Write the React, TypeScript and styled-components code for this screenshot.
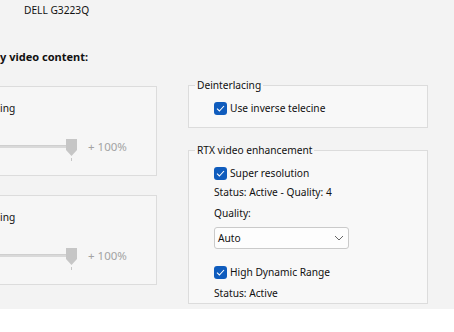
import React from "react";
import styled, {createGlobalStyle} from "styled-components";

const GlobalStyle = createGlobalStyle`
  html, body {
    margin: 0;
    background: #ffffff;
  }
  body {
    font-family: "Noto Sans", "Open Sans", sans-serif;
    font-size: 10.2px;
    color: #111111;
  }
`;

const Page = styled.div`
  height: 309px;
  background: #f3f3f3;
  overflow: hidden;
`;

const DisplayName = styled.div`
  padding: 2px 0 0 24px;
  line-height: 16px;
`;

const Heading = styled.div`
  margin-top: 31px;
  line-height: 16px;
  font-size: 11px;
  font-weight: 700;
`;

const Columns = styled.div`
  display: flex;
  margin-top: 12px;
  gap: 31px;
`;

const LeftColumn = styled.div`
  width: 157px;
  display: flex;
  flex-direction: column;
  gap: 19px;
  padding-top: 9px;
`;

const SettingBox = styled.div`
  height: 90px;
  box-sizing: border-box;
  border: 1px solid #dcdcdc;
  border-left: none;
  background: #f6f6f6;
  padding-top: 13px;
`;

const OptionText = styled.div`
  line-height: 16px;
`;

const SliderRow = styled.div`
  display: flex;
  align-items: flex-start;
  margin-top: 23px;
`;

const Track = styled.div`
  width: 66px;
  height: 3px;
  margin-top: 6px;
  background: #d9d9d9;
  border-top: 1px solid #cfcfcf;
  box-sizing: border-box;
`;

const Thumb = styled.svg`
  flex: none;
  display: block;
`;

const SliderValue = styled.span`
  margin-left: 10px;
  line-height: 16px;
  font-size: 11.5px;
  color: #a3a3a3;
`;

const RightColumn = styled.div`
  width: 240px;
  display: flex;
  flex-direction: column;
  gap: 14px;
`;

const Group = styled.fieldset<{ $top: number; $bottom: number }>`
  margin: 0;
  border: 1px solid #dcdcdc;
  background: #f8f8f8;
  padding: ${p => p.$top}px 8px ${p => p.$bottom}px 6px;
  min-width: 0;
`;

const Legend = styled.legend`
  padding: 0 2px;
  line-height: 16px;
`;

const GroupBody = styled.div`
  display: flex;
  flex-direction: column;
  align-items: flex-start;
  padding-left: 19px;
`;

const CheckRow = styled.label<{ $gap?: number }>`
  display: flex;
  align-items: center;
  gap: 3px;
  height: 16px;
  margin-top: ${p => p.$gap ?? 0}px;
`;

const Box = styled.span`
  width: 13px;
  height: 13px;
  border-radius: 3px;
  background: #0f5cbd;
  display: flex;
  align-items: center;
  justify-content: center;
  flex: none;
`;

const Line = styled.div<{ $gap: number }>`
  line-height: 16px;
  margin-top: ${p => p.$gap}px;
`;

const Select = styled.div`
  margin-top: 6px;
  width: 135px;
  height: 22px;
  box-sizing: border-box;
  border: 1px solid #cacaca;
  border-radius: 3px;
  background: #fdfdfd;
  display: flex;
  align-items: center;
  justify-content: space-between;
  padding: 0 4px 0 3px;
`;

const Checkbox: React.FC<{ label: string; gap?: number }> = ({label, gap}) => (
    <CheckRow $gap={gap}>
        <Box>
            <svg width="9" height="7" viewBox="0 0 9 7">
                <path d="M1 3.6 L3.4 6 L8 1" fill="none" stroke="#fff" strokeWidth="1.1"/>
            </svg>
        </Box>
        {label}
    </CheckRow>
);

const Slider: React.FC = () => (
    <SliderRow>
        <Track/>
        <Thumb width="12" height="22" viewBox="0 0 12 22">
            <path d="M0 0 H11 V11 L5.5 17 L0 11 Z" fill="#c6c6c6"/>
            <rect x="5" y="19" width="1" height="3" fill="#c6c6c6"/>
        </Thumb>
        <SliderValue>+ 100%</SliderValue>
    </SliderRow>
);

const App: React.FC = () => (
    <Page>
        <GlobalStyle/>
        <DisplayName>DELL G3223Q</DisplayName>
        <Heading>y video content:</Heading>
        <Columns>
            <LeftColumn>
                <SettingBox>
                    <OptionText>ing</OptionText>
                    <Slider/>
                </SettingBox>
                <SettingBox>
                    <OptionText>ing</OptionText>
                    <Slider/>
                </SettingBox>
            </LeftColumn>
            <RightColumn>
                <Group $top={7} $bottom={11}>
                    <Legend>Deinterlacing</Legend>
                    <GroupBody>
                        <Checkbox label="Use inverse telecine"/>
                    </GroupBody>
                </Group>
                <Group $top={7} $bottom={2}>
                    <Legend>RTX video enhancement</Legend>
                    <GroupBody>
                        <Checkbox label="Super resolution"/>
                        <Line $gap={3}>Status: Active - Quality: 4</Line>
                        <Line $gap={5}>Quality:</Line>
                        <Select>
                            Auto
                            <svg width="10" height="6" viewBox="0 0 10 6">
                                <path d="M1 1 L5 5 L9 1" fill="none" stroke="#666" strokeWidth="1"/>
                            </svg>
                        </Select>
                        <Checkbox label="High Dynamic Range" gap={15}/>
                        <Line $gap={5}>Status: Active</Line>
                    </GroupBody>
                </Group>
            </RightColumn>
        </Columns>
    </Page>
);

export default App;
